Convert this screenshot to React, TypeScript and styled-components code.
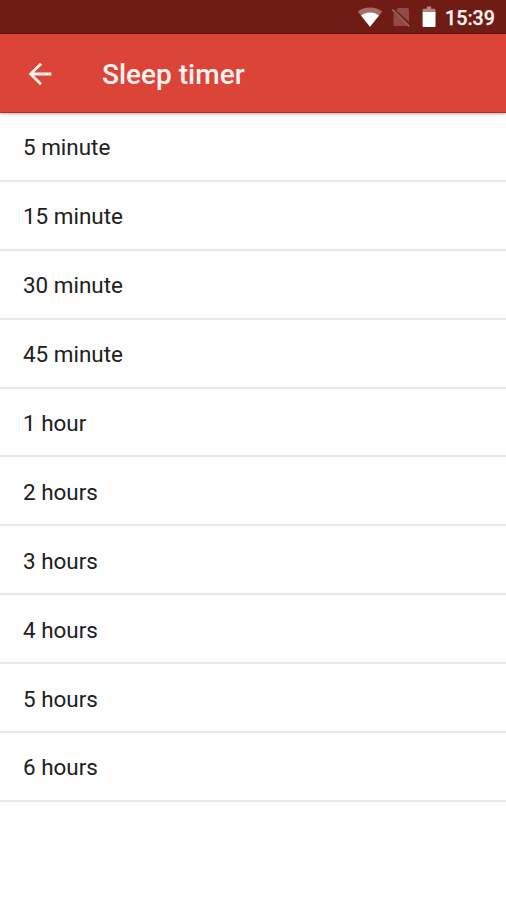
import React from "react";
import styled, { createGlobalStyle } from "styled-components";

const GlobalStyle = createGlobalStyle`
  html, body { margin: 0; padding: 0; background: #fefefe; }
  * { box-sizing: border-box; }
`;

const Screen = styled.div`
  width: 100%;
  height: 900px;
  display: flex;
  flex-direction: column;
  overflow: hidden;
  background: #fefefe;
  font-family: Roboto, sans-serif;
`;

const StatusBar = styled.header`
  flex: none;
  height: 34px;
  display: flex;
  align-items: center;
  justify-content: flex-end;
  padding: 1px 11px 0 0;
  background: #6f1c14;
  border-bottom: 1px solid #64160f;
`;

const StatusIcon = styled.svg<{ $gap: number }>`
  display: block;
  height: 24px;
  margin-right: ${({ $gap }) => $gap}px;
`;

const Clock = styled.time`
  padding-top: 3px;
  color: #fdf4f3;
  font-size: 19.7px;
  font-weight: 500;
  line-height: 30px;
  -webkit-text-stroke: 0.25px #fdf4f3;
`;

const Toolbar = styled.div`
  flex: none;
  height: 79px;
  display: flex;
  align-items: center;
  padding-left: 23px;
  background: #dc4437;
  border-bottom: 1px solid #cb2420;
  box-shadow: 0 1px 3px rgba(0, 0, 0, 0.3);
  z-index: 1;
`;

const BackButton = styled.button`
  width: 34px;
  height: 34px;
  margin-top: 1px;
  padding: 0;
  border: 0;
  background: none;
  display: block;
`;

const Title = styled.h1`
  margin: 4px 0 0 45px;
  color: #fff3f2;
  font-size: 28px;
  font-weight: 500;
  line-height: 34px;
`;

const OptionList = styled.ul`
  margin: 0;
  padding: 0;
  list-style: none;
`;

const Option = styled.li`
  height: 68.9px;
  display: flex;
  align-items: center;
  padding: 2px 0 0 23px;
  border-bottom: 2px solid #e8e8e8;
  color: #202020;
  font-size: 22.45px;
  line-height: 30px;
`;

const options = [
  "5 minute",
  "15 minute",
  "30 minute",
  "45 minute",
  "1 hour",
  "2 hours",
  "3 hours",
  "4 hours",
  "5 hours",
  "6 hours",
];

export default function App() {
  return (
    <>
      <GlobalStyle />
      <Screen>
        <StatusBar>
          <StatusIcon $gap={8} width="26" viewBox="0 0 26 24" aria-label="Wi-Fi">
            <path d="M0.8 6.4C4.2 3.7 8.3 2.4 13 2.4s8.8 1.3 12.2 4L13 21.8z" fill="#a66f69" />
            <path d="M4 10.4C6.6 8.4 9.6 7.4 13 7.4s6.4 1 9 3L13 21.8z" fill="#fff" />
          </StatusIcon>
          <StatusIcon $gap={11} width="20" viewBox="0 0 20 24" aria-label="No SIM">
            <path d="M7.2 3H16.4q1.6 0 1.6 1.6V17L5.1 5.2z" fill="#8f4b45" />
            <path d="M2.5 7.3L17.5 21H4.1q-1.6 0-1.6-1.6z" fill="#8f4b45" />
            <path d="M1.2 4.4L18.4 21.4" stroke="#a0625b" strokeWidth="1.6" />
          </StatusIcon>
          <StatusIcon $gap={9} width="14" viewBox="0 0 14 24" aria-label="Battery">
            <path d="M4.8 1.6h4.4v2.2h3.2q1.1 0 1.1 1.1V8H0.6V4.9q0-1.1 1.1-1.1h3.1z" fill="#b38681" />
            <path d="M0.6 7h12.9v14q0 1.1-1.1 1.1H1.7q-1.1 0-1.1-1.1z" fill="#fff" />
          </StatusIcon>
          <Clock>15:39</Clock>
        </StatusBar>
        <Toolbar>
          <BackButton aria-label="Back">
            <svg width="34" height="34" viewBox="0 0 24 24">
              <path d="M20 11H7.83l5.59-5.59L12 4l-8 8 8 8 1.41-1.41L7.83 13H20v-2z" fill="#fff3f2" />
            </svg>
          </BackButton>
          <Title>Sleep timer</Title>
        </Toolbar>
        <OptionList>
          {options.map((label) => (
            <Option key={label}>{label}</Option>
          ))}
        </OptionList>
      </Screen>
    </>
  );
}
